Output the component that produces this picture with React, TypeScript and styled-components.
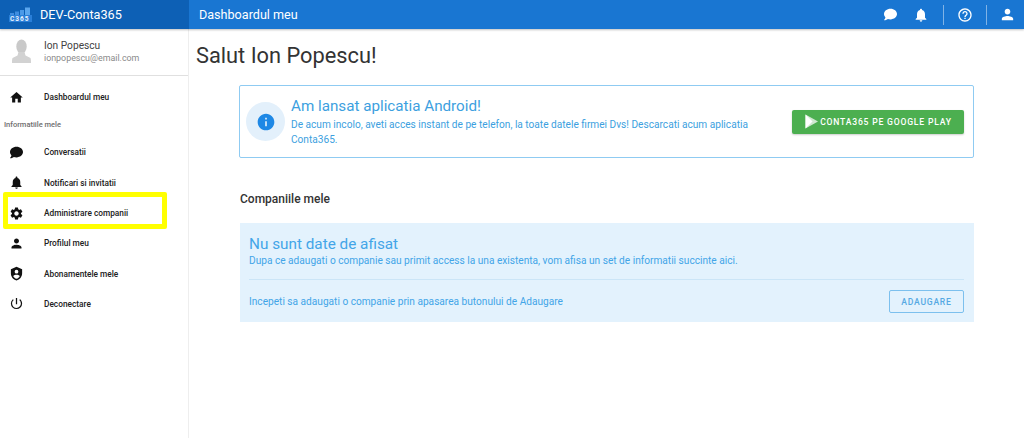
import React, { FunctionComponent, ReactNode } from 'react';
import styled, { createGlobalStyle } from 'styled-components';
import { FaComment } from 'react-icons/fa';
import {
    MdHelpOutline,
    MdHome,
    MdInfo,
    MdNotifications,
    MdPerson,
    MdPowerSettingsNew,
    MdSettings,
} from 'react-icons/md';

const GlobalStyle = createGlobalStyle`
    html, body {
        margin: 0;
        padding: 0;
        background-color: #FFFFFF;
        font-family: Roboto, "Liberation Sans", sans-serif;
    }
`;

const Page = styled.div`
    width: 1024px;
    height: 438px;
    overflow: hidden;
    display: flex;
    flex-direction: column;
`;

const Header = styled.header`
    height: 29px;
    flex-shrink: 0;
    display: flex;
    background-color: #1976D2;
    color: #FFFFFF;
    box-shadow: 0 1px 2px rgba(0, 0, 0, 0.25);
    position: relative;
    z-index: 1;
`;

const Brand = styled.div`
    width: 189px;
    box-sizing: border-box;
    padding-left: 9px;
    display: flex;
    align-items: center;
    gap: 8px;
    background-color: #0D60B5;
    font-size: 12.7px;
`;

const PageName = styled.div`
    flex: 1;
    padding-left: 10px;
    display: flex;
    align-items: center;
    font-size: 12.6px;
`;

const HeaderActions = styled.div`
    display: flex;
    align-items: center;
`;

const HeaderIcon = styled.span<{ $width: number }>`
    width: ${(p) => p.$width}px;
    display: flex;
    justify-content: center;
`;

const HeaderEndIcon = styled(HeaderIcon)`
    box-sizing: border-box;
    justify-content: flex-end;
    padding-right: 8px;
`;

const HeaderDivider = styled.span`
    width: 1px;
    height: 20px;
    background-color: rgba(255, 255, 255, 0.45);
`;

const Body = styled.div`
    flex: 1;
    display: flex;
    min-height: 0;
`;

const Sidebar = styled.aside`
    width: 189px;
    flex-shrink: 0;
    box-sizing: border-box;
    border-right: 1px solid #EEEEEE;
    position: relative;
`;

const Profile = styled.div`
    height: 47px;
    box-sizing: border-box;
    border-bottom: 1px solid #E0E0E0;
    display: flex;
    align-items: center;
    padding: 0 0 2px 12px;
    gap: 13px;
`;

const ProfileText = styled.div`
    display: flex;
    flex-direction: column;
    padding-top: 1px;
`;

const ProfileName = styled.div`
    font-size: 10.2px;
    line-height: 13px;
    color: #424242;
`;

const ProfileMail = styled.div`
    font-size: 8.9px;
    line-height: 12px;
    color: #8A8A8A;
`;

const Nav = styled.nav`
    display: flex;
    flex-direction: column;
    padding-top: 6px;
`;

const NavItem = styled.div`
    height: 30.3px;
    display: flex;
    align-items: center;
    padding-left: 9px;
    font-size: 8.3px;
    font-weight: 500;
    color: #212121;
`;

const NavIcon = styled.span`
    width: 15px;
    margin-right: 20px;
    display: flex;
    justify-content: center;
    font-size: 15px;
    color: #111111;
`;

const NavCaption = styled.div`
    height: 25px;
    display: flex;
    align-items: center;
    padding-left: 4px;
    font-size: 7.5px;
    font-weight: 500;
    color: #6E6E6E;
`;

const Highlight = styled.div`
    position: absolute;
    left: 3px;
    top: 163px;
    width: 164px;
    height: 37px;
    box-sizing: border-box;
    border: 5px solid #FFFF00;
    border-radius: 2px;
`;

const Main = styled.main`
    flex: 1;
    padding: 14px 50px 0 7px;
    box-sizing: border-box;
`;

const Title = styled.h1`
    margin: 0;
    height: 26px;
    line-height: 26px;
    font-size: 21.8px;
    font-weight: 400;
    color: #333333;
`;

const Content = styled.div`
    margin: 16px 0 0 43px;
    display: flex;
    flex-direction: column;
`;

const Banner = styled.section`
    height: 73px;
    box-sizing: border-box;
    border: 1px solid #8FCBF2;
    border-radius: 2px;
    display: flex;
    align-items: center;
    padding: 0 9px 0 6px;
    color: #3C9FE0;
`;

const InfoCircle = styled.div`
    width: 39px;
    height: 39px;
    flex-shrink: 0;
    border-radius: 50%;
    background-color: #E3F0FB;
    color: #1E88E5;
    font-size: 20px;
    display: flex;
    align-items: center;
    justify-content: center;
    margin-right: 6px;
`;

const BannerText = styled.div`
    flex: 1;
    max-width: 465px;
`;

const BannerTitle = styled.div`
    font-size: 15.2px;
    line-height: 18px;
    margin-bottom: 2px;
`;

const BannerCopy = styled.div`
    font-size: 10.15px;
    line-height: 15px;
`;

const PlayButton = styled.button`
    margin-left: auto;
    width: 172px;
    height: 24px;
    padding: 0;
    border: 0;
    border-radius: 2px;
    background-color: #4CAF50;
    color: #FFFFFF;
    font-family: inherit;
    font-size: 8.6px;
    font-weight: 500;
    letter-spacing: 0.8px;
    display: flex;
    align-items: center;
    justify-content: center;
    gap: 1px;
    box-shadow: 0 1px 2px rgba(0, 0, 0, 0.2);
`;

const SectionTitle = styled.h2`
    margin: 33px 0 0 1px;
    height: 16px;
    line-height: 16px;
    font-size: 12px;
    font-weight: 500;
    color: #333333;
`;

const Notice = styled.section`
    margin: 16px 0 0 1px;
    height: 99px;
    box-sizing: border-box;
    padding: 12px 10px 0 9px;
    background-color: #E3F2FD;
    color: #42A5E8;
`;

const NoticeTitle = styled.div`
    font-size: 15.3px;
    line-height: 19px;
`;

const NoticeCopy = styled.div`
    font-size: 10.15px;
    line-height: 13px;
`;

const NoticeDivider = styled.hr`
    margin: 12px 0 0;
    border: 0;
    border-top: 1px solid #CBE5F7;
`;

const NoticeFooter = styled.div`
    height: 43px;
    display: flex;
    align-items: center;
    justify-content: space-between;
    font-size: 10.15px;
`;

const OutlineButton = styled.button`
    width: 75px;
    height: 23px;
    padding: 0;
    background: transparent;
    border: 1px solid #7CC0EE;
    border-radius: 2px;
    color: #55A9E3;
    font-family: inherit;
    font-size: 8.6px;
    font-weight: 500;
    letter-spacing: 0.75px;
`;

const Logo: FunctionComponent = () => (
    <svg width="23" height="15" viewBox="0 0 23 15">
        <rect x="0" y="8" width="23" height="7" fill="#2A7FD8" />
        <rect x="1" y="6" width="4" height="2" fill="#3F8DE0" />
        <rect x="6" y="4.500" width="4" height="3.500" fill="#3F8DE0" />
        <rect x="11" y="3" width="4" height="5" fill="#4C9AE8" />
        <rect x="16" y="0.500" width="5" height="7.500" fill="#5AA6EE" />
        <text x="1" y="13.800" fontSize="6.500" fontWeight="700" letterSpacing="1" fill="#EAF3FD" fontFamily="Roboto, sans-serif">C365</text>
    </svg>
);

const Avatar: FunctionComponent = () => (
    <svg width="19" height="24" viewBox="0 0 19 24">
        <ellipse cx="9.500" cy="7.500" rx="5.200" ry="7" fill="#C9C9C9" />
        <path d="M6.500 13h6l1 3.500 5 2.500c.5 1.500.5 3 .5 5H0c0-2 0-3.500.5-5l5-2.500z" fill="#D2D2D2" />
    </svg>
);

const ShieldUser: FunctionComponent = () => (
    <svg width="1em" height="1em" viewBox="0 0 24 24" fill="currentColor">
        <path fillRule="evenodd" d="M12 1 3 5v6.500C3 17 6.800 22 12 23c5.200-1 9-6 9-11.500V5zm0 5a3 3 0 1 1 0 6 3 3 0 0 1 0-6zm0 14.500c-2.400-.7-4.300-2.500-5.300-4.700C8 14.600 10 14 12 14s4 .6 5.300 1.800c-1 2.200-2.900 4-5.300 4.700z" />
    </svg>
);

const PlayIcon: FunctionComponent = () => (
    <svg width="15" height="15" viewBox="0 0 14 15">
        <path d="M1 0.500 13.500 7.500 1 14.500z" fill="#CFE8D0" />
        <path d="M1 0.500 8 7.500 1 14.500z" fill="#FFFFFF" />
    </svg>
);

interface LinkProps {
    icon: ReactNode;
    label: string;
}

const SideLink: FunctionComponent<LinkProps> = ({ icon, label }) => (
    <NavItem>
        <NavIcon>{icon}</NavIcon>
        {label}
    </NavItem>
);

const App: FunctionComponent = () => {
    return (
        <Page>
            <GlobalStyle />
            <Header>
                <Brand>
                    <Logo />
                    DEV-Conta365
                </Brand>
                <PageName>Dashboardul meu</PageName>
                <HeaderActions>
                    <HeaderIcon $width={18}><FaComment size={13} /></HeaderIcon>
                    <HeaderIcon $width={44}><MdNotifications size={16} /></HeaderIcon>
                    <HeaderDivider />
                    <HeaderIcon $width={42}><MdHelpOutline size={16} /></HeaderIcon>
                    <HeaderDivider />
                    <HeaderEndIcon $width={37}><MdPerson size={17} /></HeaderEndIcon>
                </HeaderActions>
            </Header>
            <Body>
                <Sidebar>
                    <Profile>
                        <Avatar />
                        <ProfileText>
                            <ProfileName>Ion Popescu</ProfileName>
                            <ProfileMail>ionpopescu@email.com</ProfileMail>
                        </ProfileText>
                    </Profile>
                    <Nav>
                        <SideLink icon={<MdHome />} label="Dashboardul meu" />
                        <NavCaption>Informatiile mele</NavCaption>
                        <SideLink icon={<FaComment size={13} />} label="Conversatii" />
                        <SideLink icon={<MdNotifications />} label="Notificari si invitatii" />
                        <SideLink icon={<MdSettings />} label="Administrare companii" />
                        <SideLink icon={<MdPerson />} label="Profilul meu" />
                        <SideLink icon={<ShieldUser />} label="Abonamentele mele" />
                        <SideLink icon={<MdPowerSettingsNew />} label="Deconectare" />
                    </Nav>
                    <Highlight />
                </Sidebar>
                <Main>
                    <Title>Salut Ion Popescu!</Title>
                    <Content>
                        <Banner>
                            <InfoCircle><MdInfo /></InfoCircle>
                            <BannerText>
                                <BannerTitle>Am lansat aplicatia Android!</BannerTitle>
                                <BannerCopy>
                                    De acum incolo, aveti acces instant de pe telefon, la toate datele firmei Dvs! Descarcati acum aplicatia Conta365.
                                </BannerCopy>
                            </BannerText>
                            <PlayButton><PlayIcon />CONTA365 PE GOOGLE PLAY</PlayButton>
                        </Banner>
                        <SectionTitle>Companiile mele</SectionTitle>
                        <Notice>
                            <NoticeTitle>Nu sunt date de afisat</NoticeTitle>
                            <NoticeCopy>
                                Dupa ce adaugati o companie sau primit access la una existenta, vom afisa un set de informatii succinte aici.
                            </NoticeCopy>
                            <NoticeDivider />
                            <NoticeFooter>
                                Incepeti sa adaugati o companie prin apasarea butonului de Adaugare
                                <OutlineButton>ADAUGARE</OutlineButton>
                            </NoticeFooter>
                        </Notice>
                    </Content>
                </Main>
            </Body>
        </Page>
    );
};

export default App;
